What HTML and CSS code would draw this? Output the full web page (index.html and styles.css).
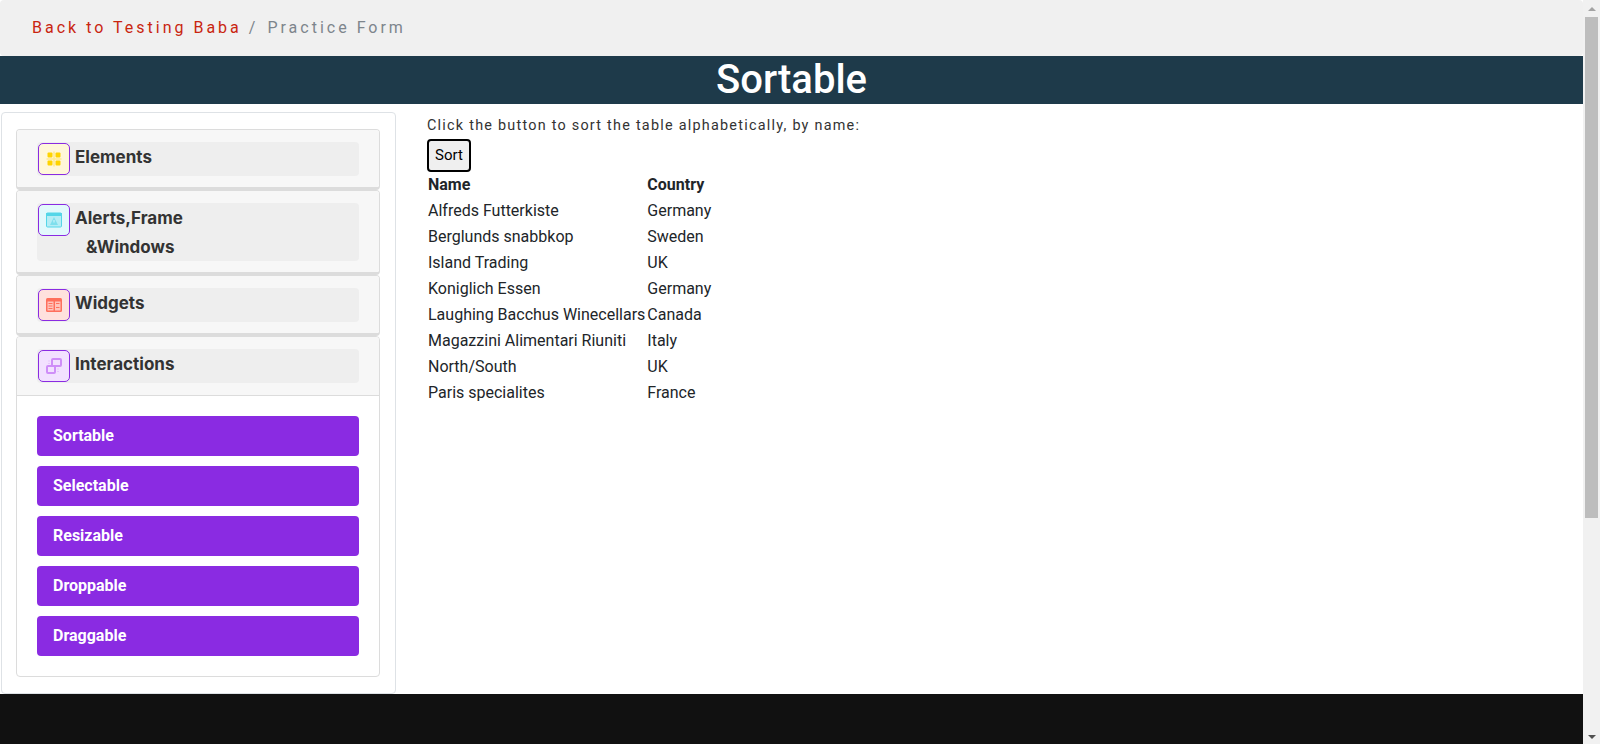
FILE: index.html
```html
<!DOCTYPE html>
<html lang="en">
<head>
  <meta charset="UTF-8">
  <title>Sortable</title>
  <link rel="stylesheet" href="styles.css">
</head>
<body>
  <div class="page">
    <nav class="breadcrumb">
      <a href="#" class="crumb-link">Back to Testing Baba</a>
      <span class="crumb-sep">/</span>
      <span class="crumb-current">Practice Form</span>
    </nav>

    <h1 class="titulo">Sortable</h1>

    <div class="contenido">
      <aside class="sidebar">
        <div class="item">
          <div class="item-head">
            <div class="tile">
              <span class="icono icono-yellow">
                <svg width="16" height="16" viewBox="0 0 16 16">
                  <path d="M0.5 8h15M8 0.5v15" stroke="#ffe98f" stroke-width="1.5"/>
                  <rect x="1.5" y="1.5" width="5" height="5" rx="1" fill="#ffd400"/>
                  <rect x="9.5" y="1.5" width="5" height="5" rx="1" fill="#ffd400"/>
                  <rect x="1.5" y="9.5" width="5" height="5" rx="1" fill="#ffd400"/>
                  <rect x="9.5" y="9.5" width="5" height="5" rx="1" fill="#ffd400"/>
                </svg>
              </span><span class="tile-text">Elements</span>
            </div>
          </div>
        </div>

        <div class="item">
          <div class="item-head">
            <div class="tile">
              <span class="icono icono-cyan">
                <svg width="16" height="16" viewBox="0 0 16 16">
                  <rect x="0.5" y="1" width="15" height="14" rx="1" fill="#b5edf5" stroke="#55d6e8"/>
                  <rect x="0" y="1" width="16" height="3" fill="#55d6e8"/>
                  <path d="M8 5l4 8h-8z" fill="#7fdfed"/>
                  <path d="M8 8v2.5" stroke="#d8f6fa"/>
                </svg>
              </span><span class="tile-text">Alerts,Frame</span>
              <span class="tile-text tile-second">&amp;Windows</span>
            </div>
          </div>
        </div>

        <div class="item">
          <div class="item-head">
            <div class="tile">
              <span class="icono icono-red">
                <svg width="16" height="16" viewBox="0 0 16 16">
                  <rect x="0" y="1" width="16" height="14" rx="1.5" fill="#ff6f5c"/>
                  <rect x="1.5" y="4.5" width="6" height="9" fill="#ffc4bb"/>
                  <rect x="9" y="4.5" width="5.5" height="9" fill="#ffc4bb"/>
                  <path d="M2.5 6.5h4M2.5 9h4M2.5 11.5h4M10 6.5h3.5M10 10.5h3.5" stroke="#ff6f5c"/>
                </svg>
              </span><span class="tile-text">Widgets</span>
            </div>
          </div>
        </div>

        <div class="item">
          <div class="item-head item-head-open">
            <div class="tile">
              <span class="icono icono-purple">
                <svg width="16" height="16" viewBox="0 0 16 16">
                  <rect x="6" y="1" width="9" height="7" rx="1" fill="#f2e1ff" stroke="#cf8ef8" stroke-width="2"/>
                  <rect x="1" y="8" width="8" height="7" rx="1" fill="none" stroke="#cf8ef8" stroke-width="2"/>
                  <path d="M3 2.5v1M3 5v1M12 10.5v1M12 13v1" stroke="#e3bffb" stroke-width="1.5"/>
                </svg>
              </span><span class="tile-text">Interactions</span>
            </div>
          </div>
          <div class="item-body">
            <a href="#" class="menu-btn">Sortable</a>
            <a href="#" class="menu-btn">Selectable</a>
            <a href="#" class="menu-btn">Resizable</a>
            <a href="#" class="menu-btn">Droppable</a>
            <a href="#" class="menu-btn">Draggable</a>
          </div>
        </div>
      </aside>

      <main class="principal">
        <p class="intro">Click the button to sort the table alphabetically, by name:</p>
        <button class="btn-sort" type="button">Sort</button>
        <table class="tabla">
          <tr><th>Name</th><th>Country</th></tr>
          <tr><td>Alfreds Futterkiste</td><td>Germany</td></tr>
          <tr><td>Berglunds snabbkop</td><td>Sweden</td></tr>
          <tr><td>Island Trading</td><td>UK</td></tr>
          <tr><td>Koniglich Essen</td><td>Germany</td></tr>
          <tr><td>Laughing Bacchus Winecellars</td><td>Canada</td></tr>
          <tr><td>Magazzini Alimentari Riuniti</td><td>Italy</td></tr>
          <tr><td>North/South</td><td>UK</td></tr>
          <tr><td>Paris specialites</td><td>France</td></tr>
        </table>
      </main>
    </div>

    <footer class="pie"></footer>
  </div>

  <div class="scrollbar">
    <span class="flecha-up"></span>
    <div class="thumb"></div>
    <span class="flecha-down"></span>
  </div>
</body>
</html>
```

FILE: styles.css
```css
* {
  box-sizing: border-box;
}

html, body {
  height: 100%;
}

body {
  margin: 0;
  display: flex;
  overflow: hidden;
  background-color: #ffffff;
  font-family: 'Roboto', sans-serif;
  font-size: 16px;
  line-height: 24px;
  color: #212529;
}

.page {
  flex: 1;
  min-width: 0;
  display: flex;
  flex-direction: column;
}

.breadcrumb {
  height: 56px;
  padding: 0 32px;
  display: flex;
  align-items: center;
  gap: 7px;
  background-color: #f0f0f0;
  border-radius: 4px;
  letter-spacing: 3px;
  line-height: 54px;
}

.crumb-link {
  color: #c9250f;
  text-decoration: none;
}

.crumb-sep, .crumb-current {
  color: #7d858c;
}

.crumb-current {
  margin-left: 2px;
}

.titulo {
  margin: 0;
  height: 48px;
  background-color: #1e3a4a;
  color: #ffffff;
  font-size: 40px;
  font-weight: 500;
  line-height: 48px;
  text-align: center;
}

.contenido {
  display: flex;
  flex: 1;
}

.sidebar {
  flex: none;
  width: 395px;
  height: 582px;
  margin: 8px 0 0 1px;
  padding: 16px 14px;
  border: 1px solid #dee2e6;
  border-radius: 4px;
}

.item {
  width: 364px;
  border: 1px solid #dcdcdc;
  border-bottom-width: 3px;
  border-radius: 4px;
}

.item:last-child {
  border-bottom-width: 1px;
}

.item-head {
  padding: 12px 20px 11px;
  background-color: #f7f7f7;
  border-radius: 3px;
}

.item-head-open {
  padding-bottom: 12px;
  border-bottom: 1px solid #dcdcdc;
  border-radius: 3px 3px 0 0;
}

.tile {
  background-color: #eeeeee;
  border-radius: 4px;
}

.icono {
  display: inline-flex;
  align-items: center;
  justify-content: center;
  width: 32px;
  height: 32px;
  margin: 1px 5px 0 1px;
  border: 1px solid #8a2be2;
  border-radius: 5px;
  vertical-align: top;
}

.icono-yellow { background-color: #fff7d9; }
.icono-cyan { background-color: #e2f9fc; }
.icono-red { background-color: #ffe1dd; }
.icono-purple { background-color: #f2e1ff; }

.tile-text {
  display: inline-block;
  height: 34px;
  font-family: 'Inter', sans-serif;
  font-size: 17px;
  font-weight: 700;
  line-height: 31px;
  color: #333333;
}

.tile-second {
  display: block;
  height: 24px;
  margin-left: 49px;
  line-height: 21px;
}

.item-body {
  padding: 20px;
  display: flex;
  flex-direction: column;
  gap: 10px;
}

.menu-btn {
  height: 40px;
  padding: 0 16px;
  background-color: #8a2be2;
  border-radius: 4px;
  color: #ffffff;
  font-weight: 700;
  line-height: 40px;
  text-decoration: none;
}

.principal {
  padding: 10px 0 0 31px;
}

.intro {
  margin: 0 0 1px;
  font-size: 14.4px;
  letter-spacing: 1.24px;
  line-height: 24px;
  color: #333333;
}

.btn-sort {
  display: block;
  width: 44px;
  height: 33px;
  padding: 0 0 1px;
  background-color: #efefef;
  border: 2px solid #000000;
  border-radius: 4px;
  color: #000000;
  font-family: 'Roboto', sans-serif;
  font-size: 15px;
}

.tabla {
  margin: -1px 0 0 -1px;
}

.tabla th, .tabla td {
  padding: 0;
  text-align: left;
}

.pie {
  height: 50px;
  background-color: #111111;
}

.scrollbar {
  width: 17px;
  display: flex;
  flex-direction: column;
  align-items: center;
  background-color: #f1f1f1;
}

.flecha-up, .flecha-down {
  width: 0;
  height: 0;
  border-left: 4px solid transparent;
  border-right: 4px solid transparent;
}

.flecha-up {
  margin: 7px 0 6px;
  border-bottom: 4px solid #a3a3a3;
}

.thumb {
  width: 13px;
  height: 501px;
  background-color: #bdbdbd;
}

.flecha-down {
  margin-top: auto;
  margin-bottom: 5px;
  border-top: 4px solid #505050;
}
```
